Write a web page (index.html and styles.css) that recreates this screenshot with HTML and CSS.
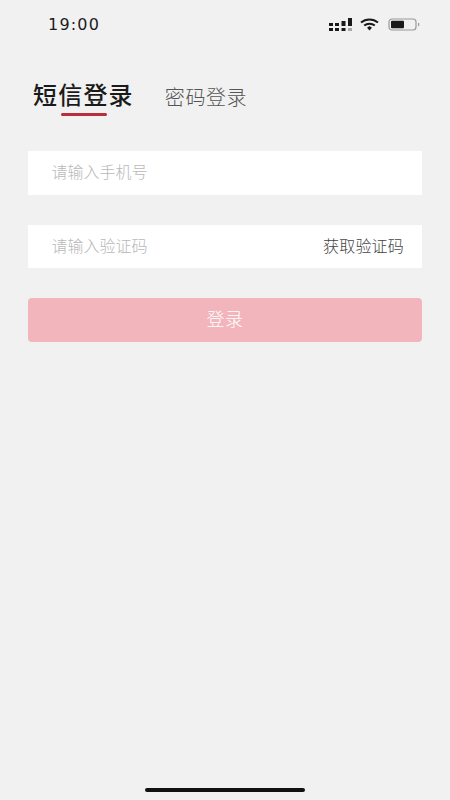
FILE: index.html
```html
<!DOCTYPE html>
<html lang="zh">
<head>
<meta charset="utf-8">
<title>登录</title>
<link rel="stylesheet" href="styles.css">
</head>
<body>
<div class="screen">
  <header class="status">
    <span class="time">19:00</span>
    <div class="status-icons">
      <svg class="signal" width="23" height="13" viewBox="0 0 23 13">
        <g fill="#1a1a1a">
          <rect x="0" y="10" width="4" height="3"/><rect x="0" y="5" width="4" height="3"/>
          <rect x="6" y="10" width="4" height="3"/><rect x="6" y="5" width="4" height="3"/>
          <rect x="12.5" y="10" width="4" height="3"/><rect x="12.5" y="3" width="4" height="5"/>
          <rect x="19" y="0" width="4" height="8"/>
        </g>
        <rect x="19" y="10" width="4" height="3" fill="#aaa"/>
      </svg>
      <svg class="wifi" width="19" height="13" viewBox="0 0 19 13">
        <path d="M1 4.6 C5.8 .4 13.2 .4 18 4.6" fill="none" stroke="#1a1a1a" stroke-width="2"/>
        <path d="M4.2 7.6 C7.2 5.1 11.8 5.1 14.8 7.6" fill="none" stroke="#1a1a1a" stroke-width="2"/>
        <path d="M7 9.8 L9.5 7.9 L12 9.8 L9.5 12.4 Z" fill="#1a1a1a"/>
      </svg>
      <svg class="battery" width="32" height="13" viewBox="0 0 32 13">
        <rect x="1" y="1" width="27" height="11" rx="3" fill="none" stroke="#999" stroke-width="1.2"/>
        <rect x="3" y="2.8" width="13" height="7.4" rx="1" fill="#1a1a1a"/>
        <rect x="30" y="5" width="1.2" height="3" fill="#999"/>
      </svg>
    </div>
  </header>

  <nav class="tabs">
    <div class="tab tab-active">短信登录<span class="tab-line"></span></div>
    <div class="tab">密码登录</div>
  </nav>

  <main class="form">
    <div class="field"><span class="placeholder">请输入手机号</span></div>
    <div class="field"><span class="placeholder">请输入验证码</span><span class="code">获取验证码</span></div>
    <button class="submit" type="button">登录</button>
  </main>

  <div class="home-bar"></div>
</div>
</body>
</html>
```

FILE: styles.css
```css
* { box-sizing: border-box; }
html, body { margin: 0; padding: 0; }
body {
  background: #f1f1f1;
  font-family: "Noto Sans CJK SC", "Liberation Sans", sans-serif;
}
.screen {
  width: 450px;
  height: 800px;
  display: flex;
  flex-direction: column;
  overflow: hidden;
}
.status {
  height: 48px;
  flex: none;
  display: flex;
  justify-content: space-between;
  align-items: center;
  padding: 0 30px 0 48px;
}
.time {
  font-family: "DejaVu Sans", "Liberation Sans", sans-serif;
  font-size: 16px;
  letter-spacing: 1.2px;
  color: #1c1c1c;
}
.status-icons {
  display: flex;
  align-items: center;
  gap: 9px;
}
.signal { margin-right: -1px; }
.tabs {
  display: flex;
  align-items: flex-end;
  gap: 31px;
  height: 103px;
  padding-left: 33px;
  flex: none;
}
.tab {
  position: relative;
  font-size: 20px;
  font-weight: 300;
  line-height: 30px;
  letter-spacing: 0.6px;
  color: #555;
  margin-bottom: 39px;
}
.tab-active {
  font-size: 24px;
  font-weight: 500;
  letter-spacing: 1.2px;
  line-height: 34px;
  color: #1a1a1a;
  margin-bottom: 40px;
}
.tab-line {
  position: absolute;
  left: 28px;
  bottom: -5px;
  width: 46px;
  height: 3.5px;
  border-radius: 2px;
  background: #b5303c;
}
.form {
  display: flex;
  flex-direction: column;
  gap: 30px;
  padding: 0 28px;
}
.field {
  height: 43.6px;
  background: #fff;
  display: flex;
  align-items: center;
  justify-content: space-between;
  padding: 0 18px 3px 23.5px;
  font-size: 16px;
  font-weight: 300;
}
.placeholder { color: #b8b8b8; }
.code { color: #444; letter-spacing: 0.2px; }
.submit {
  height: 43.6px;
  border: 0;
  border-radius: 4px;
  padding: 0 0 3px;
  background: #f2b5bc;
  color: #fff;
  font: inherit;
  font-size: 18px;
  font-weight: 300;
  letter-spacing: 0.5px;
}
.home-bar {
  margin: auto auto 8px;
  width: 160px;
  height: 4px;
  border-radius: 2px;
  background: #111;
}
```
